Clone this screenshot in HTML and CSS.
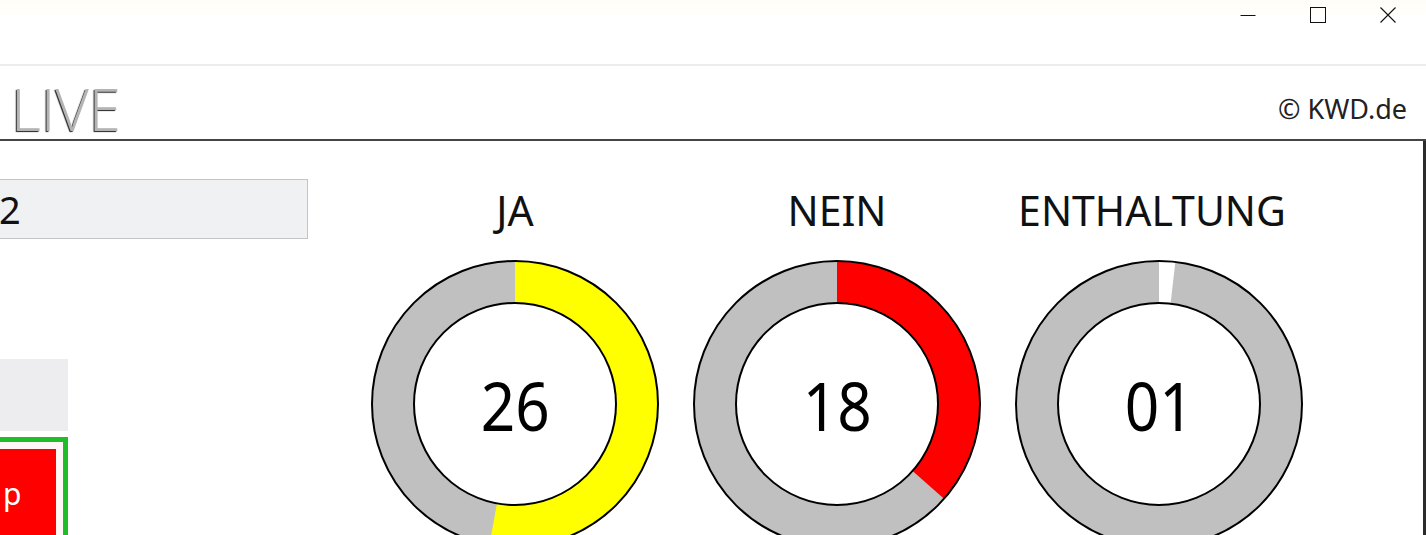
FILE: index.html
```html
<!DOCTYPE html>
<html lang="de">
  <head>
    <meta charset="UTF-8" />
    <meta name="viewport" content="width=device-width, initial-scale=1.0" />
    <title>LIVE Abstimmung</title>
    <link rel="stylesheet" href="styles.css">
  </head>
  <body>
    <div class="window">
      <div class="titlebar">
        <button class="ctrl" title="Minimieren">
          <svg width="16" height="16" viewBox="0 0 16 16"><path d="M0.5 8.5h15" stroke="#111" stroke-width="1" /></svg>
        </button>
        <button class="ctrl" title="Maximieren">
          <svg width="16" height="16" viewBox="0 0 16 16"><rect x="0.5" y="0.5" width="15" height="15" fill="none" stroke="#111" stroke-width="1" /></svg>
        </button>
        <button class="ctrl" title="Schließen">
          <svg width="16" height="16" viewBox="0 0 16 16"><path d="M0.5 0.5l15 15M15.5 0.5l-15 15" stroke="#111" stroke-width="1.1" /></svg>
        </button>
      </div>

      <header class="appbar">
        <span class="logo">LIVE</span>
        <span class="copy">© KWD.de</span>
      </header>

      <main class="content">
        <aside class="side">
          <div class="field">2</div>
          <div class="tile"></div>
          <div class="stop-frame">
            <button class="stop">p</button>
          </div>
        </aside>

        <!-- Ergebnis der Abstimmung, Bogenlänge aus dem Anteil -->
        <section class="votes">
          <div class="vote">
            <div class="vote-label">JA</div>
            <div class="dial">
              <svg width="290" height="290" viewBox="0 0 290 290">
                <circle cx="145" cy="145" r="122" fill="none" stroke="#c0c0c0" stroke-width="42" />
                <circle class="arc" cx="145" cy="145" r="122" fill="none" stroke="#ffff00" stroke-width="42"
                  stroke-dasharray="405 766.5" />
                <circle cx="145" cy="145" r="143" fill="none" stroke="#000" stroke-width="2" />
                <circle cx="145" cy="145" r="101" fill="#fff" stroke="#000" stroke-width="2" />
              </svg>
              <span class="count">26</span>
            </div>
          </div>

          <div class="vote">
            <div class="vote-label">NEIN</div>
            <div class="dial">
              <svg width="290" height="290" viewBox="0 0 290 290">
                <circle cx="145" cy="145" r="122" fill="none" stroke="#c0c0c0" stroke-width="42" />
                <circle class="arc" cx="145" cy="145" r="122" fill="none" stroke="#ff0000" stroke-width="42"
                  stroke-dasharray="280 766.5" />
                <circle cx="145" cy="145" r="143" fill="none" stroke="#000" stroke-width="2" />
                <circle cx="145" cy="145" r="101" fill="#fff" stroke="#000" stroke-width="2" />
              </svg>
              <span class="count">18</span>
            </div>
          </div>

          <div class="vote">
            <div class="vote-label label-wide">ENTHALTUNG</div>
            <div class="dial">
              <svg width="290" height="290" viewBox="0 0 290 290">
                <circle cx="145" cy="145" r="122" fill="none" stroke="#c0c0c0" stroke-width="42" />
                <circle class="arc" cx="145" cy="145" r="122" fill="none" stroke="#ffffff" stroke-width="42"
                  stroke-dasharray="14 766.5" />
                <circle cx="145" cy="145" r="143" fill="none" stroke="#000" stroke-width="2" />
                <circle cx="145" cy="145" r="101" fill="#fff" stroke="#000" stroke-width="2" />
              </svg>
              <span class="count">01</span>
            </div>
          </div>
        </section>
      </main>
    </div>
  </body>
</html>
```

FILE: styles.css
```css
body {
  margin: 0;
  font-family: "Noto Sans", "Open Sans", sans-serif;
  background-color: #fdfdfd;
  color: #111;
  overflow: hidden;
}

.window {
  width: 1426px;
  height: 535px;
  display: flex;
  flex-direction: column;
}

/* Fensterleiste oben */
.titlebar {
  height: 64px;
  flex-shrink: 0;
  display: flex;
  justify-content: flex-end;
  align-items: flex-start;
  padding-right: 3px;
  background: linear-gradient(#fffdf6, #ffffff 20px);
  border-bottom: 2px solid #ececec;
}

.ctrl {
  width: 70px;
  height: 30px;
  padding: 0;
  border: none;
  background: none;
  display: flex;
  align-items: center;
  justify-content: center;
}

.appbar {
  height: 73px;
  flex-shrink: 0;
  display: flex;
  justify-content: space-between;
  align-items: flex-start;
  padding: 0 19px 0 11px;
  background-color: #fff;
  border-bottom: 2px solid #444;
}

.logo {
  margin-top: 14px;
  font-family: "Open Sans", sans-serif;
  font-weight: 300;
  font-size: 58px;
  line-height: 1;
  color: #b4b4b4;
  text-shadow: -1px 1px 1px #222;
}

.copy {
  margin-top: 29px;
  font-size: 27px;
  line-height: 1;
  color: #222;
}

.content {
  flex: 1;
  display: flex;
  border-right: 3px solid #2b2b2b;
  min-height: 0;
  background-color: #fff;
}

/* linke Spalte, teilweise abgeschnitten */
.side {
  width: 310px;
  flex-shrink: 0;
  margin-left: -2px;
  display: flex;
  flex-direction: column;
  align-items: flex-start;
}

.side > * {
  flex-shrink: 0;
}

.field {
  margin-top: 38px;
  width: 308px;
  height: 58px;
  border: 1px solid #c4c4c4;
  background-color: #f0f1f3;
  font-size: 38px;
  line-height: 58px;
}

.tile {
  margin-top: 120px;
  width: 70px;
  height: 72px;
  background-color: #ededf0;
}

.stop-frame {
  margin-top: 6px;
  width: 70px;
  height: 120px;
  box-sizing: border-box;
  border: 5px solid #1fbe29;
  border-left: none;
  padding: 7px 7px 0 0;
  background-color: #fff6f6;
}

.stop {
  width: 100%;
  height: 100%;
  border: none;
  padding: 30px 0 0 5px;
  background-color: #ff0000;
  color: #fff;
  font-family: "Noto Sans", sans-serif;
  font-size: 30px;
  line-height: 1;
  display: flex;
  align-items: flex-start;
  justify-content: flex-start;
}

.votes {
  padding-left: 62px;
  display: grid;
  grid-template-columns: repeat(3, 290px);
  column-gap: 32px;
  align-content: start;
}

.vote {
  display: flex;
  flex-direction: column;
  align-items: center;
}

.vote-label {
  margin-top: 49px;
  font-size: 41px;
  line-height: 40px;
  color: #111;
  white-space: nowrap;
}

.label-wide {
  margin-right: 14px;
}

.dial {
  margin-top: 29px;
  display: grid;
  place-items: center;
}

.dial svg,
.dial .count {
  grid-area: 1 / 1;
}

.arc {
  transform: rotate(-90deg);
  transform-origin: 145px 145px;
}

.count {
  font-size: 67px;
  line-height: 1;
  color: #000;
  transform: scaleX(0.9);
  position: relative;
  top: 1px;
}
```
